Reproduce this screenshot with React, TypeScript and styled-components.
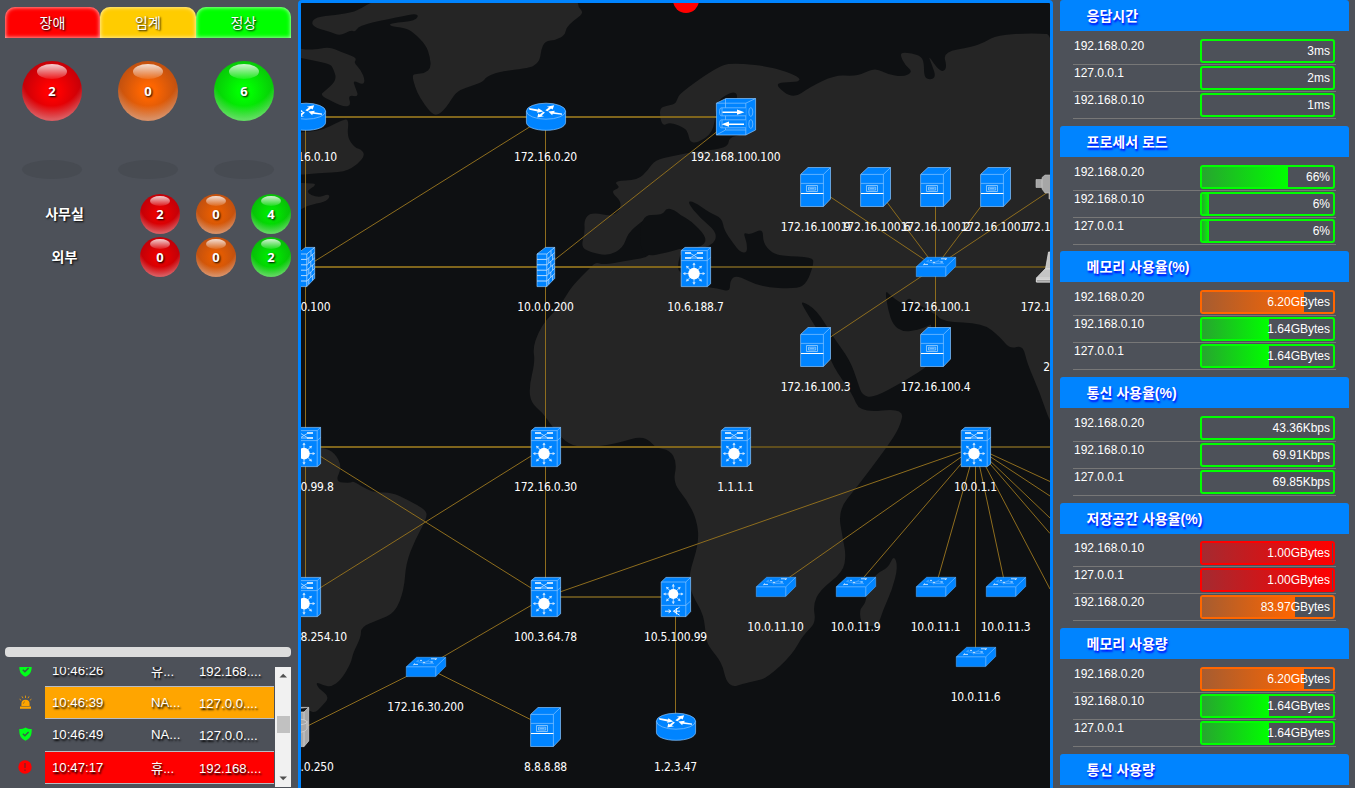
import React from 'react';
import styled, { createGlobalStyle } from 'styled-components';

const GlobalStyle = createGlobalStyle`
  * { box-sizing: border-box; }
  html, body { margin: 0; padding: 0; overflow: hidden; background: #4d5159; }
  body { font-family: 'Liberation Sans', 'Noto Sans CJK KR', sans-serif; color: #fff; }
`;

const BLUE = '#0084ff';

const Page = styled.div`
  display: grid;
  grid-template-columns: 298px 755px 1fr;
  width: 1355px;
  height: 788px;
  overflow: hidden;
  background: #4d5159;
`;

/* ---------- left panel ---------- */

const SidePanel = styled.aside`
  display: flex;
  flex-direction: column;
  height: 788px;
  padding: 7px 7px 0 5px;
`;

const Tabs = styled.div`
  display: grid;
  grid-template-columns: 95px 96px 95px;
  height: 31px;
`;

const Tab = styled.div<{ $color: string }>`
  display: flex;
  align-items: center;
  justify-content: center;
  padding-bottom: 2px;
  border-radius: 10px 10px 0 0;
  background: ${(p) => p.$color};
  box-shadow: inset 0 0 4px rgba(255, 255, 255, 0.85);
  font-size: 14px;
  text-shadow: 1px 1px 2px #000;
`;

const BigRow = styled.div`
  display: grid;
  grid-template-columns: repeat(3, 96px);
  justify-items: center;
  margin: 23px -1px 0;
`;

const Ball = styled.div<{ $size: number; $from: string; $to: string }>`
  display: flex;
  position: relative;
  align-items: center;
  justify-content: center;
  width: ${(p) => p.$size}px;
  height: ${(p) => p.$size}px;
  padding-bottom: 1px;
  border-radius: 50%;
  background:
    radial-gradient(circle at 50% 25%, transparent 55%, rgba(255, 255, 255, 0.36) 80%),
    radial-gradient(circle, ${(p) => p.$from} 15%, ${(p) => p.$to} 72%);
  font: bold 13px 'Noto Sans', sans-serif;
  text-shadow: 1px 1px 2px #000;

  &::before {
    content: '';
    position: absolute;
    top: 5%;
    left: 25%;
    width: 50%;
    height: 25%;
    border-radius: 50%;
    background: linear-gradient(rgba(255, 255, 255, 0.82), rgba(255, 255, 255, 0.1));
  }
`;

const ShadowRow = styled(BigRow)`
  margin-top: 39px;
`;

const GroundShadow = styled.div`
  width: 60px;
  height: 19px;
  border-radius: 50%;
  background: #474b52;
`;

const Groups = styled.div`
  display: grid;
  gap: 3px;
  margin-top: 15px;
`;

const GroupRow = styled.div`
  display: grid;
  grid-template-columns: 135px 56px 55px 40px;
  align-items: center;
  height: 40px;
`;

const GroupName = styled.div`
  padding: 0 16px 2px 0;
  font-size: 14px;
  font-weight: 700;
  text-align: center;
  text-shadow: 1px 1px 2px #000;
`;

const Splitter = styled.div`
  height: 10px;
  margin-top: auto;
  border-radius: 4px;
  background: #ddd;
`;

const LogBox = styled.div`
  display: flex;
  height: 121px;
  margin-top: 10px;
  overflow: hidden;
`;

const LogRows = styled.div`
  width: 270px;
  margin-top: -13.5px;
`;

const LogRow = styled.div`
  display: grid;
  grid-template-columns: 40px 229px;
  height: 32.4px;
`;

const LogIcon = styled.div`
  display: flex;
  align-items: center;
  justify-content: center;
`;

const LogCells = styled.div<{ $bg?: string }>`
  display: grid;
  grid-template-columns: 99px 48px 1fr;
  align-items: center;
  padding-left: 7px;
  border-top: 1px solid #b9bcc4;
  background: ${(p) => p.$bg || 'transparent'};
  font-size: 13.2px;
  text-shadow: 1px 2px 2px #000;
  white-space: nowrap;
`;

const LogAddress = styled.span`
  padding-top: 2px;
`;

const ScrollTrack = styled.div`
  display: flex;
  flex-direction: column;
  align-items: center;
  width: 16px;
  height: 120px;
  background: #f1f1f1;
`;

const ScrollArrow = styled.svg`
  display: block;
  width: 16px;
  height: 17px;
`;

const ScrollThumb = styled.div`
  width: 13px;
  height: 17px;
  margin: 32px 0 37px;
  background: #c1c1c1;
`;

/* ---------- centre: topology ---------- */

const Canvas = styled.main`
  position: relative;
  height: 788px;
  overflow: hidden;
  border: 3px solid ${BLUE};
  border-bottom: 0;
  border-radius: 4px 4px 0 0;
  background: #0e1012;
`;

const Drawing = styled.svg`
  display: block;
  width: 749px;
  height: 785px;
`;

const AlertDot = styled.div`
  position: absolute;
  top: -16px;
  left: 371.5px;
  width: 26px;
  height: 26px;
  border-radius: 50%;
  background: #f00;
`;

const NodeBox = styled.div<{ $x: number; $y: number }>`
  position: absolute;
  left: ${(p) => p.$x - 320}px;
  top: ${(p) => p.$y - 23}px;
  display: flex;
  flex-direction: column;
  align-items: center;
  width: 40px;
`;

const NodeIcon = styled.svg`
  display: block;
  width: 40px;
  height: 40px;
  overflow: visible;
`;

const NodeLabel = styled.span`
  height: 16px;
  margin: 12px 1px 0 0;
  font: 12px/16px 'DejaVu Sans Condensed', 'DejaVu Sans', sans-serif;
  letter-spacing: -0.2px;
  white-space: nowrap;
`;

/* ---------- right panel ---------- */

const StatsPanel = styled.aside`
  width: 289px;
  height: 788px;
  margin-left: 7px;
  padding-top: 0.2px;
  overflow: hidden;
`;

const StatSection = styled.section`
  height: 125.6px;
`;

const StatTitle = styled.h2`
  display: flex;
  align-items: center;
  height: 31.1px;
  margin: 0;
  padding: 0 0 1px 26.5px;
  border-radius: 3px 3px 0 0;
  background: ${BLUE};
  font-size: 14px;
  font-weight: 700;
  text-shadow: 1px 2px 2px #00f;
`;

const StatRows = styled.div`
  width: 263px;
  margin: 0 0 0 13px;
  padding-top: 6.7px;
`;

const StatRow = styled.div`
  display: flex;
  justify-content: space-between;
  height: 27px;
  padding: 1px 1px 0 1px;
  border-bottom: 1px solid #777;
  font-size: 12px;
  line-height: 14px;
`;

const Gauge = styled.div<{ $color: string }>`
  position: relative;
  width: 135px;
  height: 24px;
  border: 2px solid ${(p) => p.$color};
  border-radius: 3px;
`;

const GaugeFill = styled.div<{ $from: string; $to: string; $pct: number }>`
  width: ${(p) => p.$pct}%;
  height: 20px;
  background: linear-gradient(90deg, ${(p) => p.$from}, ${(p) => p.$to});
`;

const GaugeText = styled.span`
  position: absolute;
  top: 0;
  right: 3px;
  line-height: 20px;
`;

/* ---------- data ---------- */

const tones = {
  red: ['#ff0000', '#c40008'],
  orange: ['#ff6600', '#c05010'],
  green: ['#00ff00', '#08c808'],
  redSmall: ['#ea0000', '#c00008'],
  orangeSmall: ['#e85d00', '#c05010'],
  greenSmall: ['#00e800', '#08bd08'],
} as const;

const gaugeTones: Record<string, [string, string]> = {
  green: ['#27a52f', '#00ff00'],
  orange: ['#a65c30', '#ff6600'],
  red: ['#a52a30', '#ff0000'],
};

type Stat = [string, string, string, number];
const sections: { title: string; rows: Stat[] }[] = [
  { title: '응답시간', rows: [['192.168.0.20', '3ms', 'green', 0], ['127.0.0.1', '2ms', 'green', 0], ['192.168.0.10', '1ms', 'green', 0]] },
  { title: '프로세서 로드', rows: [['192.168.0.20', '66%', 'green', 66], ['192.168.0.10', '6%', 'green', 5.4], ['127.0.0.1', '6%', 'green', 5.4]] },
  { title: '메모리 사용율(%)', rows: [['192.168.0.20', '6.20GBytes', 'orange', 78], ['192.168.0.10', '1.64GBytes', 'green', 51.2], ['127.0.0.1', '1.64GBytes', 'green', 51.2]] },
  { title: '통신 사용율(%)', rows: [['192.168.0.20', '43.36Kbps', 'green', 0], ['192.168.0.10', '69.91Kbps', 'green', 0], ['127.0.0.1', '69.85Kbps', 'green', 0]] },
  { title: '저장공간 사용율(%)', rows: [['192.168.0.10', '1.00GBytes', 'red', 99.4], ['127.0.0.1', '1.00GBytes', 'red', 99.4], ['192.168.0.20', '83.97GBytes', 'orange', 71]] },
  { title: '메모리 사용량', rows: [['192.168.0.20', '6.20GBytes', 'orange', 78], ['192.168.0.10', '1.64GBytes', 'green', 51.2], ['127.0.0.1', '1.64GBytes', 'green', 51.2]] },
  { title: '통신 사용량', rows: [] },
];

const logs = [
  { icon: 'ok', time: '10:46:26', name: '유...', ip: '192.168....', bg: '' },
  { icon: 'siren', time: '10:46:39', name: 'NA...', ip: '127.0.0....', bg: '#ffa500' },
  { icon: 'ok', time: '10:46:49', name: 'NA...', ip: '127.0.0....', bg: '' },
  { icon: 'error', time: '10:47:17', name: '휴...', ip: '192.168....', bg: '#ff0000' },
];

type Kind = 'router' | 'balancer' | 'server' | 'firewall' | 'core' | 'layer' | 'switch' | 'camera' | 'laptop' | 'storage' | 'none';
const nodes: [number, number, Kind, string][] = [
  [305, 117, 'router', '172.16.0.10'],
  [545, 117, 'router', '172.16.0.20'],
  [735, 117, 'balancer', '192.168.100.100'],
  [815, 187, 'server', '172.16.100.9'],
  [875, 187, 'server', '172.16.100.6'],
  [935, 187, 'server', '172.16.100.2'],
  [995, 187, 'server', '172.16.100.7'],
  [1055, 187, 'camera', '172.16.100.8'],
  [305, 267, 'firewall', '1.0.0.100'],
  [545, 267, 'firewall', '10.0.0.200'],
  [695, 267, 'core', '10.6.188.7'],
  [935, 267, 'switch', '172.16.100.1'],
  [1055, 267, 'laptop', '172.16.100.5'],
  [815, 347, 'server', '172.16.100.3'],
  [935, 347, 'server', '172.16.100.4'],
  [1071, 327, 'none', '211.1.1.10'],
  [305, 447, 'core', '10.10.99.8'],
  [545, 447, 'core', '172.16.0.30'],
  [735, 447, 'core', '1.1.1.1'],
  [975, 447, 'core', '10.0.1.1'],
  [305, 597, 'core', '192.168.254.10'],
  [545, 597, 'core', '100.3.64.78'],
  [675, 597, 'layer', '10.5.100.99'],
  [775, 587, 'switch', '10.0.11.10'],
  [855, 587, 'switch', '10.0.11.9'],
  [935, 587, 'switch', '10.0.11.1'],
  [1005, 587, 'switch', '10.0.11.3'],
  [975, 657, 'switch', '10.0.11.6'],
  [425, 667, 'switch', '172.16.30.200'],
  [305, 727, 'storage', '10.0.0.250'],
  [545, 727, 'server', '8.8.8.88'],
  [675, 727, 'router', '1.2.3.47'],
];

const thin: number[][] = [
  [305.5, 117, 305.5, 597], [545.5, 117, 545.5, 597],
  [545.5, 117, 305.5, 267], [735.5, 117, 545.5, 267],
  [815.5, 187, 935.5, 267], [875.5, 187, 935.5, 267], [935.5, 187, 935.5, 347], [995.5, 187, 935.5, 267], [1055.5, 187, 935.5, 267],
  [935.5, 267, 815.5, 347],
  [305.5, 447, 545.5, 597], [305.5, 597, 545.5, 447],
  [545.5, 597, 425.5, 667], [425.5, 667, 305.5, 727], [425.5, 667, 545.5, 727],
  [545.5, 597, 975.5, 447], [675.5, 597, 675.5, 727],
  [975.5, 447, 775.5, 587], [975.5, 447, 855.5, 587], [975.5, 447, 935.5, 587], [975.5, 447, 975.5, 657], [975.5, 447, 1005.5, 587],
  [975.5, 447, 1050, 481.5], [975.5, 447, 1050, 496], [975.5, 447, 1050, 518], [975.5, 447, 1050, 533.5], [975.5, 447, 1050, 589],
];
const bright: number[][] = [[305, 117, 736, 117], [305, 267, 695, 267], [305, 447, 736, 447]];
const dim: number[][] = [[695, 267, 1055, 267], [736, 447, 1055, 447], [545, 597, 675, 597]];

const land = [
  '378 0 578 0 578 7 584 13 573 21 566 28 565 35 556 40 545 41 541 50 540 60 533 67 520 69 498 72 486 77 483 82 465 88 456 92 446 108 437 116 430 112 420 98 415 87 412 75 416 74 425 73 431 68 430 57 426 45 413 32 405 28 389 26 391 23 416 21 419 13 398 17 360 25 355 32 351 30 340 36 331 32 316 28 311 23 316 17 335 15 355 12 368 4',
  '290 46 306 50 318 49 330 47 341 52 355 57 356 60 354 63 361 70 365 80 363 85 353 80 355 87 359 97 348 95 351 105 345 107 335 103 320 95 325 91 337 80 333 68 330 64 311 60 290 56',
  '290 133 318 131 331 126 342 120 349 119 347 137 355 148 361 149 365 155 358 164 345 172 318 173 290 176',
  '290 183 315 183 315 186 305 192 318 198 328 194 330 197 325 202 308 205 290 216',
  '660 108 666 106 675 104 677 100 680 93 720 65 737 63 773 67 800 77 799 82 783 82 775 85 793 99 810 87 835 75 853 76 862 74 875 68 887 74 903 77 913 72 905 65 900 55 903 52 920 55 924 62 924 77 930 80 936 77 932 65 928 55 937 68 943 72 947 67 943 52 972 47 985 42 997 35 1033 33 1060 35 1060 430 1050 423 1040 393 1027 363 1023 345 1010 349 1000 337 983 323 943 322 934 312 930 316 932 335 937 345 933 363 903 382 873 398 862 395 858 383 850 360 833 337 817 310 800 300 805 310 822 337 833 367 852 393 860 413 904 408 900 427 887 447 857 487 838 510 843 540 846 555 843 572 820 590 813 605 816 623 803 635 792 655 767 678 755 681 742 684 733 687 726 681 722 663 710 648 706 640 704 615 692 595 688 577 699 543 697 520 687 500 673 483 677 463 670 450 656 448 648 439 638 437 625 441 608 445 581 448 565 442 551 425 543 413 531 403 529 387 535 362 533 348 538 333 546 320 561 305 571 287 591 267 596 262 603 265 631 260 650 257 660 240 651 215 641 222 628 233 623 248 608 256 590 252 581 247 585 232 584 220 591 212 615 217 623 203 610 191 621 188 613 181 638 180 648 170 655 160 673 156 693 152 728 148 729 137 743 135 755 117 735 103 738 95 733 91 718 100 716 110 713 133 697 143 690 142 688 133 685 128 670 122 663 126 660 118',
  '894 555 898 567 892 590 883 610 878 626 862 626 859 610 866 603 867 587 877 573 888 568',
  '290 446 323 447 335 453 342 467 335 482 351 483 353 481 373 493 391 492 408 500 426 510 427 518 415 540 406 563 404 590 395 613 378 620 361 627 361 637 353 653 351 663 341 680 331 687 323 685 316 682 318 688 330 697 321 707 315 713 308 710 290 707',
];

const water = [
  '640 215 663 215 666 208 675 210 680 215 690 220 707 237 703 247 682 248 670 252 640 258',
  '687 202 693 201 710 213 722 218 724 230 733 243 740 252 747 253 747 243 743 232 750 235 763 228 763 243 772 253 783 256 812 257 814 263 807 283 797 289 760 287 737 275 730 280 730 292 717 288 703 287 678 273 678 262 682 250 712 247 718 233 700 218',
  '885 290 890 295 903 305 909 297 914 303 934 312 937 322 928 326 918 330 903 332 893 325 888 310',
];

/* Closed outline whose corners are rounded through the midpoints of its sides. */
function outline(list: string) {
  const n = list.split(' ').map(Number);
  const pts: [number, number][] = [];
  for (let i = 0; i < n.length; i += 2) pts.push([n[i], n[i + 1]]);
  const mid = (a: [number, number], b: [number, number]) => `${(a[0] + b[0]) / 2} ${(a[1] + b[1]) / 2}`;
  const last = pts[pts.length - 1];
  let d = `M${mid(last, pts[0])}`;
  pts.forEach((p, i) => {
    d += `Q${p[0]} ${p[1]} ${mid(p, pts[(i + 1) % pts.length])}`;
  });
  return d + 'Z';
}

/* ---------- device icons ---------- */

const edge = { fill: BLUE, stroke: '#86c4ff', strokeWidth: 0.7, strokeLinejoin: 'round' as const };

function Sun({ cx, cy, r, reach }: { cx: number; cy: number; r: number; reach: number }) {
  return (
    <g transform={`translate(${cx} ${cy})`}>
      {[0, 45, 90, 135, 180, 225, 270, 315].map((a) => (
        <g key={a} transform={`rotate(${a})`}>
          <path d={`M0 0V${-reach}`} stroke="#c4e2ff" strokeWidth="0.9" />
          <path d={`M-1.6 ${-reach + 2}L0 ${-reach - 0.6}L1.6 ${-reach + 2}Z`} fill="#c4e2ff" />
        </g>
      ))}
      <circle r={r} fill="#fff" />
    </g>
  );
}

function Device({ kind }: { kind: Kind }) {
  switch (kind) {
    case 'router':
      return (
        <g>
          <path d="M.4 14.2V25.2C.4 30 9 33.3 20 33.3S39.6 30 39.6 25.2V14.2Z" {...edge} />
          <ellipse cx="20" cy="14.2" rx="19.6" ry="8" {...edge} />
          <path d="M3 11L12 12.6L12.4 11.2L17.4 14.6L11 15.8L11.6 14.4L3.4 12.8Z" fill="#fff" />
          <path d="M19.3 13.2L23 10.6L20.8 9.8L28.2 8.2L26.6 12.6L25 11.6L21.4 14.2Z" fill="#fff" />
          <path d="M36 17.8L26.7 16.8L26.2 18.2L22.3 14.6L28.8 13.8L28.2 15.2L36 16.6Z" fill="#fff" />
          <path d="M19 15.6L15.6 18.6L18 19.2L11.4 20.6L12.2 16.4L13.8 17.4L17.2 14.8Z" fill="#fff" />
        </g>
      );
    case 'balancer':
      return (
        <g>
          <path d="M.4 6.2L10 1.5H39.6V33L29.8 38H.4Z" {...edge} />
          <path d="M.4 6.2H29.8L39.6 1.5M29.8 6.2V38M9.5 1.8V33L.6 37.8M9.5 33H29.8" fill="none" stroke="#86c4ff" strokeWidth=".7" />
          <path d="M29.8 10.8H5.2C3 10.8 3 18.8 5.2 18.8H29.8M29.8 22.8H5.2C3 22.8 3 30.8 5.2 30.8H29.8M6 11V18.6M6 23V30.6" fill={BLUE} stroke="#86c4ff" strokeWidth=".7" />
          <path d="M6.5 14.6H21V12.6L28.4 15.2L21 17.8V15.9H6.5ZM28 26.5H13V24.6L5.6 27.2L13 29.7V27.9H28Z" fill="#fff" />
          <ellipse cx="34.8" cy="15" rx="2" ry="4.4" {...edge} />
          <ellipse cx="34.8" cy="27" rx="2" ry="4.4" {...edge} />
        </g>
      );
    case 'server':
      return (
        <g>
          <path d="M4.6 7.4L12 .5H34.5V32L27.4 39.5H4.6Z" {...edge} />
          <path d="M5 7.4H27.4L34.5 .5M27.4 7.4V39.5M5 16.4H27.4" fill="none" stroke="#86c4ff" strokeWidth=".7" />
          <path d="M5 26.5H27.4" stroke="#fff" strokeWidth="1" />
          <path d="M10.5 18.5H21.5V24.5H10.5ZM12.5 20.2H19.7V23H12.5ZM13.5 21.6H18.5" fill="none" stroke="#9bd0ff" strokeWidth=".8" />
        </g>
      );
    case 'firewall':
      return (
        <g>
          <path d="M11 7L19.5.4H28.7V31.4L20.8 39.6H11Z" {...edge} />
          <path d="M11 7H20.8L28.7.4M20.8 7V39.6" fill="none" stroke="#b5dcff" strokeWidth=".8" />
          <path d="M11 12.4H20.8M11 17.8H20.8M11 23.2H20.8M11 28.6H20.8M11 34H20.8" stroke="#c8e4ff" strokeWidth=".9" />
          <path d="M20.8 12.4L28.7 5.6M20.8 17.8L28.7 11M20.8 23.2L28.7 16.2M20.8 28.6L28.7 21.4M20.8 34L28.7 26.6M25 3.8V8.8M22.8 10.6V16M26.6 7.6V12.8M24.8 14.4V19.6M22.8 21.4V26.8M26.6 18V23M24.8 25V30.4M22.8 32V37.4M26.6 28.4V33.4" stroke="#c8e4ff" strokeWidth=".7" />
        </g>
      );
    case 'core':
      return (
        <g>
          <path d="M5.2 3.6L9 .4H34.6V36.8L31.4 39.6H5.2Z" {...edge} />
          <path d="M5.2 3.6H31.2L34.6.4M31.2 3.6V39.6M5.2 13.6H31.2L34.6 10.4" fill="none" stroke="#86c4ff" strokeWidth=".7" />
          <path d="M9 6H15M21 6H27M9 11H15M21 11H27" stroke="#fff" strokeWidth="1.7" />
          <path d="M14 6L22 11M14 11L22 6M15 11H21" stroke="#c4e2ff" strokeWidth=".8" />
          <Sun cx={18} cy={26.6} r={5.8} reach={10.6} />
        </g>
      );
    case 'layer':
      return (
        <g>
          <path d="M5.2 5L10 .4H34.6V34.6L30 39.6H5.2Z" {...edge} />
          <path d="M5.2 5H29.8L34.6.4M29.8 5V39.6M5.2 28.4H29.8L34.6 24" fill="none" stroke="#86c4ff" strokeWidth=".7" />
          <Sun cx={17.3} cy={17} r={5} reach={9.6} />
          <path d="M9 34.2H14M12.6 32.6L15 34.2L12.6 35.8M23.6 30.2L17.4 34.2L23.6 38.2M17.8 34.2H24M20.4 31V37.4" fill="none" stroke="#fff" strokeWidth=".9" />
        </g>
      );
    case 'switch':
      return (
        <g transform="translate(0 10)">
          <path d="M.3 9.8L10.6 .3H39.7V9.4L29.6 19.6H.3Z" fill={BLUE} stroke="#4ba8ff" strokeWidth=".6" />
          <path d="M.3 9.8H29.6M29.8 19.4V9.8L39.6.4" fill="none" stroke="#7cc0ff" strokeWidth=".7" />
          <path d="M13 3L10.6 4.4L14 5.2H20L23.5 2.6M17 7.4L20 4.8H26M28 6.6H18L15.4 5.6" fill="none" stroke="#46a5ff" strokeWidth="1" />
          <path d="M14 3.4H16M25 1.8H31M24.5 5H27M8 7.4H12M7.2 7.9L9 6.6M17 5.4H19M30 1.8L29 3" fill="none" stroke="#d4eaff" strokeWidth=".9" />
        </g>
      );
    case 'camera':
      return (
        <g fill="#a6a6a6" stroke="#c2c2c2" strokeWidth=".6">
          <path d="M0 12.5H6V20.5H0ZM6 10.5L9 8H34V26H9L6 22ZM13 26H18V32H13Z" />
        </g>
      );
    case 'laptop':
      return (
        <g fill="#c4c4c4" stroke="#e2e2e2" strokeWidth=".7">
          <path d="M12.5 5H40V22H9.5Z" />
          <path d="M9 22L.4 31V35H40V22ZM.4 31H40" />
          <path d="M.4 32.5H40V35H.4Z" fill="#a0a0a0" />
        </g>
      );
    case 'storage':
      return (
        <g fill="#a8a8a8" stroke="#d8d8d8" strokeWidth=".7" transform="translate(-12 0)">
          <path d="M5 5L9.5.4H34.7V34L30 39.6H5ZM5 5H30L34.7.4M30 5V39.6" />
          <path d="M12 16V24C12 27 33 27 33 21V14" />
          <ellipse cx="22.5" cy="15" rx="10.5" ry="3" />
        </g>
      );
    default:
      return null;
  }
}

function Lines({ list, color, width }: { list: number[][]; color: string; width: number }) {
  return (
    <g stroke={color} strokeWidth={width}>
      {list.map((l, i) => (
        <line key={i} x1={l[0]} y1={l[1]} x2={l[2]} y2={l[3]} />
      ))}
    </g>
  );
}

function StatusIcon({ kind }: { kind: string }) {
  if (kind === 'ok')
    return (
      <svg width="13" height="14" viewBox="0 0 13 14">
        <path d="M6.5.4C8.4 1.6 10.4 2 12.7 2.1C12.9 8 11.6 11.6 6.5 13.8C1.4 11.6.1 8 .3 2.1C2.6 2 4.6 1.6 6.5.4Z" fill="#00ff1a" />
        <path d="M3.8 6.7L5.9 8.7L9.6 5" fill="none" stroke="#3f5a4c" strokeWidth="1.4" />
      </svg>
    );
  if (kind === 'siren')
    return (
      <svg width="13" height="14" viewBox="0 0 13 14" fill="#ffa500">
        <path d="M2.4 11V8.8A4.1 4.1 0 0 1 10.6 8.8V11ZM1 11.6H12V13.8H1Z" />
        <path d="M6.5 .6V3M3 1.4L4 3.2M10 1.4L9 3.2M.6 4.2L2.2 5.4M12.4 4.2L10.8 5.4" stroke="#ffa500" strokeWidth=".8" />
        <path d="M4.4 8.8A2.2 2.2 0 0 1 6 6.6" fill="none" stroke="#8a6a2a" strokeWidth=".7" />
      </svg>
    );
  return (
    <svg width="14" height="14" viewBox="0 0 14 14">
      <circle cx="7" cy="7" r="6.7" fill="#f00" />
      <path d="M7 3V8M7 9.4V11" stroke="#8e1c20" strokeWidth="1.5" />
    </svg>
  );
}

function StatBlock({ title, rows }: { title: string; rows: Stat[] }) {
  return (
    <StatSection>
      <StatTitle>{title}</StatTitle>
      <StatRows>
        {rows.map(([ip, value, tone, pct]) => (
          <StatRow key={ip}>
            <span>{ip}</span>
            <Gauge $color={gaugeTones[tone][1]}>
              <GaugeFill $from={gaugeTones[tone][0]} $to={gaugeTones[tone][1]} $pct={pct} />
              <GaugeText>{value}</GaugeText>
            </Gauge>
          </StatRow>
        ))}
      </StatRows>
    </StatSection>
  );
}

export default function App() {
  return (
    <>
      <GlobalStyle />
      <Page>
        <SidePanel>
          <Tabs>
            <Tab $color="#ff0000">장애</Tab>
            <Tab $color="#ffcc00">임계</Tab>
            <Tab $color="#00ff00">정상</Tab>
          </Tabs>
          <BigRow>
            <Ball $size={60} $from={tones.red[0]} $to={tones.red[1]}>2</Ball>
            <Ball $size={60} $from={tones.orange[0]} $to={tones.orange[1]}>0</Ball>
            <Ball $size={60} $from={tones.green[0]} $to={tones.green[1]}>6</Ball>
          </BigRow>
          <ShadowRow>
            <GroundShadow />
            <GroundShadow />
            <GroundShadow />
          </ShadowRow>
          <Groups>
            {[['사무실', 2, 0, 4], ['외부', 0, 0, 2]].map(([name, a, b, c]) => (
              <GroupRow key={name}>
                <GroupName>{name}</GroupName>
                <Ball $size={40} $from={tones.redSmall[0]} $to={tones.redSmall[1]}>{a}</Ball>
                <Ball $size={40} $from={tones.orangeSmall[0]} $to={tones.orangeSmall[1]}>{b}</Ball>
                <Ball $size={40} $from={tones.greenSmall[0]} $to={tones.greenSmall[1]}>{c}</Ball>
              </GroupRow>
            ))}
          </Groups>
          <Splitter />
          <LogBox>
            <LogRows>
              {logs.map((l) => (
                <LogRow key={l.time}>
                  <LogIcon><StatusIcon kind={l.icon} /></LogIcon>
                  <LogCells $bg={l.bg}>
                    <span>{l.time}</span>
                    <span>{l.name}</span>
                    <LogAddress>{l.ip}</LogAddress>
                  </LogCells>
                </LogRow>
              ))}
              <LogRow>
                <LogIcon />
                <LogCells />
              </LogRow>
            </LogRows>
            <ScrollTrack>
              <ScrollArrow viewBox="0 0 16 17"><path d="M4.5 10.5L8.2 6.8L12 10.5Z" fill="#505050" /></ScrollArrow>
              <ScrollThumb />
              <ScrollArrow viewBox="0 0 16 17"><path d="M4.5 6.5L8.2 10.2L12 6.5Z" fill="#505050" /></ScrollArrow>
            </ScrollTrack>
          </LogBox>
        </SidePanel>

        <Canvas>
          <Drawing viewBox="301 3 749 785">
            <g fill="#252525">{land.map((s, i) => <path key={i} d={outline(s)} />)}</g>
            <g fill="#0e1012">{water.map((s, i) => <path key={i} d={outline(s)} />)}</g>
            <Lines list={dim} color="#5f4e1d" width={2} />
            <Lines list={bright} color="#7f651c" width={2} />
            <Lines list={thin} color="#8e6d1e" width={1} />
          </Drawing>
          {nodes.map(([x, y, kind, label]) => (
            <NodeBox key={`${x}-${y}`} $x={x} $y={y}>
              <NodeIcon viewBox="0 0 40 40"><Device kind={kind} /></NodeIcon>
              <NodeLabel>{label}</NodeLabel>
            </NodeBox>
          ))}
          <AlertDot />
        </Canvas>

        <StatsPanel>
          {sections.map((s) => <StatBlock key={s.title} title={s.title} rows={s.rows} />)}
        </StatsPanel>
      </Page>
    </>
  );
}
